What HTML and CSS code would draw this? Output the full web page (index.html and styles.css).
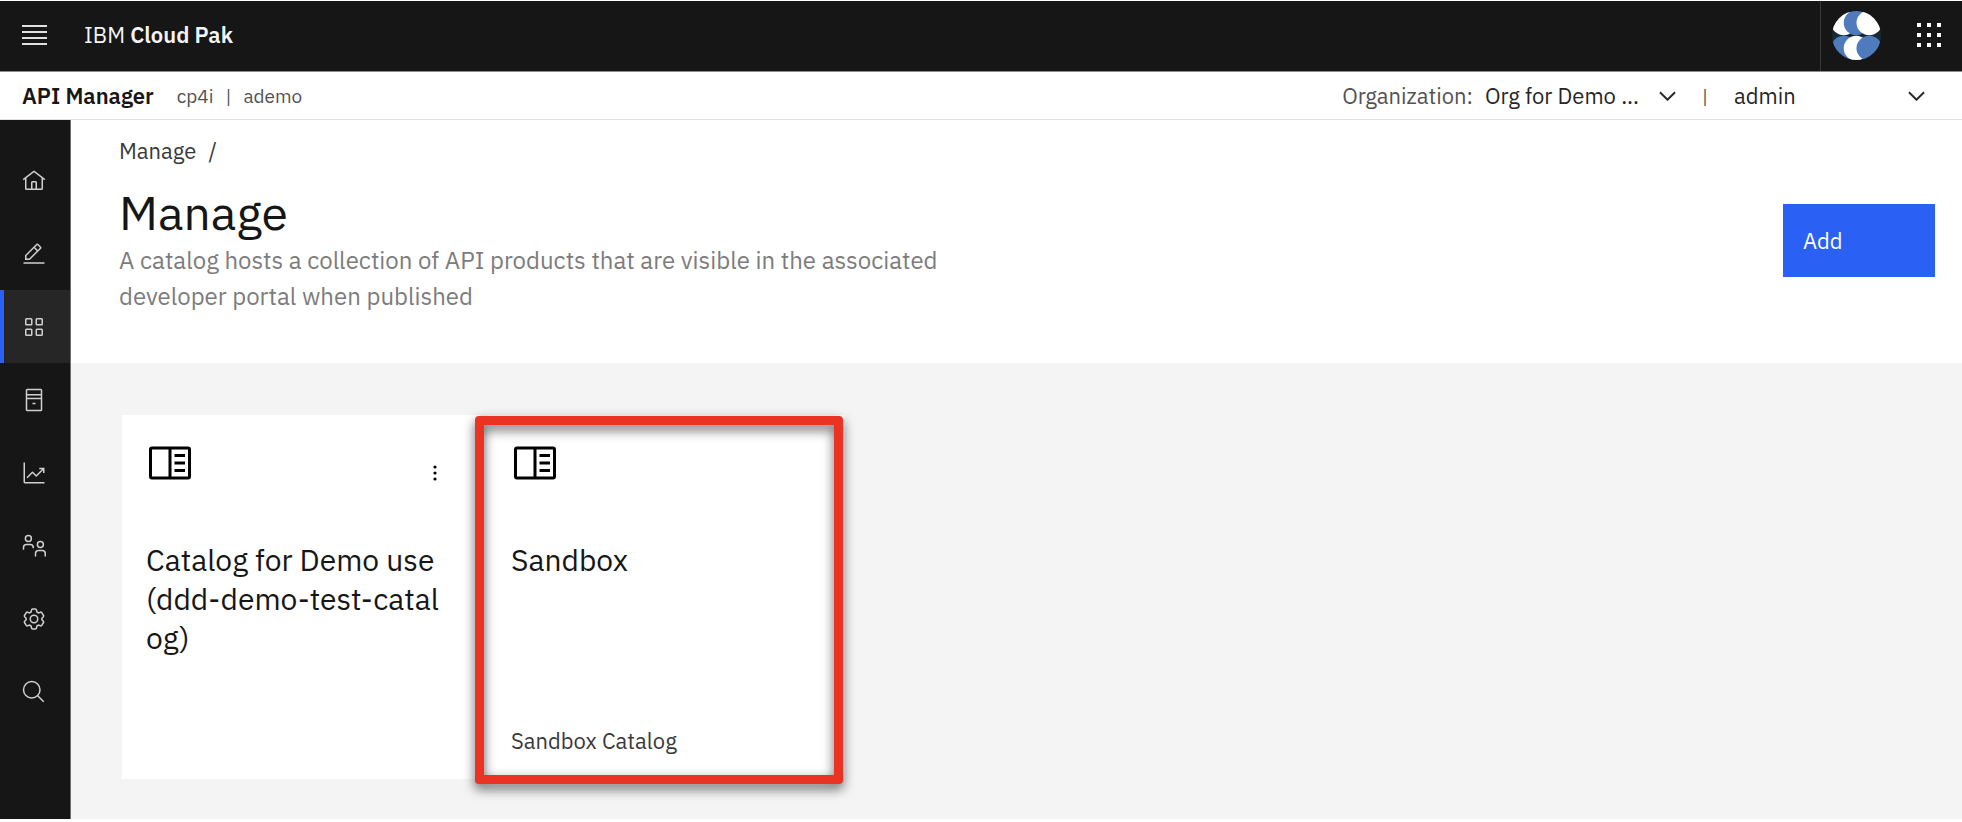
FILE: index.html
```html
<!DOCTYPE html>
<html lang="en">
<head>
<meta charset="utf-8">
<meta name="viewport" content="width=device-width, initial-scale=1">
<title>API Manager - Manage</title>
<link rel="stylesheet" href="styles.css">
</head>
<body>
<svg class="defs" aria-hidden="true">
  <symbol id="book" viewBox="0 0 32 32">
    <path d="M19 10h7v2h-7zM19 15h7v2h-7zM19 20h7v2h-7z"/>
    <path d="M28 5H4a2 2 0 0 0-2 2v18a2 2 0 0 0 2 2h24a2 2 0 0 0 2-2V7a2 2 0 0 0-2-2zM4 7h11v18H4zm13 18V7h11v18z"/>
  </symbol>
</svg>
<div class="shell">
  <header class="topbar">
    <button class="icon-button" type="button" aria-label="Open menu">
      <svg class="menu-icon" viewBox="0 0 25 20"><path d="M0 1h25M0 7h25M0 13h25M0 19h25"/></svg>
    </button>
    <a class="brand" href="#">IBM <strong>Cloud Pak</strong></a>
    <div class="topbar-actions">
      <button class="icon-button" type="button" aria-label="Account">
        <svg class="avatar" viewBox="155 30 146 146">
          <clipPath id="disc"><circle cx="228" cy="103" r="73"/></clipPath>
          <g clip-path="url(#disc)">
            <rect x="155" y="30" width="146" height="146" fill="#172a33"/>
            <ellipse cx="190" cy="65" rx="38" ry="37" fill="#fff"/>
            <ellipse cx="227" cy="65" rx="37" ry="37" fill="#4f7abc"/>
            <ellipse cx="266" cy="65" rx="38" ry="37" fill="#fff"/>
            <ellipse cx="190" cy="141" rx="38" ry="37" fill="#4f7abc"/>
            <ellipse cx="227" cy="141" rx="37" ry="37" fill="#fff"/>
            <ellipse cx="266" cy="141" rx="38" ry="37" fill="#4f7abc"/>
          </g>
        </svg>
      </button>
      <button class="icon-button" type="button" aria-label="App switcher">
        <svg class="switcher-icon" viewBox="0 0 24 24"><path d="M0 0h4v4H0zM10 0h4v4h-4zM20 0h4v4h-4zM0 10h4v4H0zM10 10h4v4h-4zM20 10h4v4h-4zM0 20h4v4H0zM10 20h4v4h-4zM20 20h4v4h-4z"/></svg>
      </button>
    </div>
  </header>

  <div class="subbar">
    <strong class="product">API Manager</strong>
    <span class="instance">cp4i</span>
    <span class="instance-divider">|</span>
    <span class="instance">ademo</span>
    <div class="context">
      <label class="context-label" for="org">Organization:</label>
      <span class="picker">
        <select id="org"><option>Org for Demo ...</option></select>
        <svg class="chevron" viewBox="0 0 18 10"><path d="M1 1l8 8 8-8"/></svg>
      </span>
      <span class="context-divider">|</span>
      <span class="picker">
        <select aria-label="User"><option>admin</option></select>
        <svg class="chevron" viewBox="0 0 18 10"><path d="M1 1l8 8 8-8"/></svg>
      </span>
    </div>
  </div>

  <div class="body">
    <nav class="sidebar" aria-label="Main">
      <a class="nav-item" href="#" aria-label="Home"><svg viewBox="0 0 32 32"><path d="M16.6 2.2a1 1 0 0 0-1.2 0L1 13.4 2.2 15 4 13.6V26a2 2 0 0 0 2 2h20a2 2 0 0 0 2-2V13.6l1.8 1.4 1.2-1.6zM18 26h-4v-8h4zm2 0v-8a2 2 0 0 0-2-2h-4a2 2 0 0 0-2 2v8H6V12l10-7.7L26 12v14z"/></svg></a>
      <a class="nav-item" href="#" aria-label="Develop"><svg viewBox="0 0 32 32"><path d="M2 27h28v2H2zM25.4 9c.8-.8.8-2 0-2.8l-3.6-3.6c-.8-.8-2-.8-2.8 0l-15 15V24h6.4zM20.4 4L24 7.6l-3 3L17.4 7zM6 22v-3.6l10-10 3.6 3.6-10 10z"/></svg></a>
      <a class="nav-item nav-item-active" href="#" aria-label="Manage" aria-current="page"><svg viewBox="0 0 32 32"><path d="M12 4H6a2 2 0 0 0-2 2v6a2 2 0 0 0 2 2h6a2 2 0 0 0 2-2V6a2 2 0 0 0-2-2zm0 8H6V6h6zM26 4h-6a2 2 0 0 0-2 2v6a2 2 0 0 0 2 2h6a2 2 0 0 0 2-2V6a2 2 0 0 0-2-2zm0 8h-6V6h6zM12 18H6a2 2 0 0 0-2 2v6a2 2 0 0 0 2 2h6a2 2 0 0 0 2-2v-6a2 2 0 0 0-2-2zm0 8H6v-6h6zM26 18h-6a2 2 0 0 0-2 2v6a2 2 0 0 0 2 2h6a2 2 0 0 0 2-2v-6a2 2 0 0 0-2-2zm0 8h-6v-6h6z"/></svg></a>
      <a class="nav-item" href="#" aria-label="Resources"><svg class="line" viewBox="0 0 32 32"><rect x="6" y="2" width="20" height="28" rx="1"/><path d="M6 9h20M6 14h20M14 20.5h4"/></svg></a>
      <a class="nav-item" href="#" aria-label="Analytics"><svg viewBox="0 0 32 32"><path d="M4 2H2v26a2 2 0 0 0 2 2h26v-2H4zM30 9h-7v2h3.6L19 18.6l-4.3-4.3a1 1 0 0 0-1.4 0L6 21.6 7.4 23l6.6-6.6 4.3 4.3a1 1 0 0 0 1.4 0L28 12.4V16h2z"/></svg></a>
      <a class="nav-item" href="#" aria-label="Members"><svg class="line" viewBox="0 0 32 32"><circle cx="8.5" cy="6" r="4"/><path d="M2 21v-3a4 4 0 0 1 4-4h5a4 4 0 0 1 4 4v1"/><circle cx="24.5" cy="14" r="4"/><path d="M18 30v-4a4 4 0 0 1 4-4h5a4 4 0 0 1 4 4v4"/></svg></a>
      <a class="nav-item" href="#" aria-label="Settings"><svg class="line" viewBox="0 0 32 32"><circle cx="16" cy="16" r="5"/><path d="M26.5 17v-2l2-2a1.5 1.5 0 0 0 .2-1.7L26.3 7.5a1.5 1.5 0 0 0-1.7-.6l-2.7.9-2-1.2-.6-2.6a1.5 1.5 0 0 0-1.4-1.2h-3.8a1.5 1.5 0 0 0-1.4 1.2l-.6 2.6-2 1.2-2.700-.9a1.5 1.5 0 0 0-1.7.6l-2.4 3.8a1.5 1.5 0 0 0 .2 1.7l2 2v2l-2 2a1.5 1.5 0 0 0-.2 1.7l2.4 3.8a1.5 1.5 0 0 0 1.7.6l2.7-.9 2 1.2.6 2.600a1.5 1.5 0 0 0 1.4 1.2h3.8a1.5 1.5 0 0 0 1.4-1.2l.6-2.600 2-1.2 2.7.9a1.5 1.5 0 0 0 1.7-.6l2.4-3.8a1.5 1.5 0 0 0-.2-1.7z"/></svg></a>
      <a class="nav-item" href="#" aria-label="Search"><svg class="line" viewBox="0 0 32 32"><circle cx="13" cy="13" r="11"/><path d="M21 21l8 8"/></svg></a>
    </nav>

    <main class="main">
      <section class="hero">
        <div class="hero-text">
          <nav class="breadcrumb" aria-label="Breadcrumb"><a href="#">Manage</a><span>/</span></nav>
          <h1 class="title">Manage</h1>
          <p class="description">A catalog hosts a collection of API products that are visible in the associated developer portal when published</p>
        </div>
        <button class="add-button" type="button">Add</button>
      </section>

      <section class="catalogs">
        <article class="card">
          <div class="card-head">
            <svg class="card-icon" aria-hidden="true"><use href="#book"/></svg>
            <button class="icon-button card-menu" type="button" aria-label="Catalog options">
              <svg class="kebab" viewBox="0 0 4 16"><circle cx="2" cy="2" r="1.6"/><circle cx="2" cy="8" r="1.6"/><circle cx="2" cy="14" r="1.6"/></svg>
            </button>
          </div>
          <h2 class="card-title"><span>Catalog for Demo use</span> <span class="card-id">(ddd-demo-test-catalog)</span></h2>
        </article>
        <article class="card card-marked">
          <div class="card-head">
            <svg class="card-icon" aria-hidden="true"><use href="#book"/></svg>
          </div>
          <h2 class="card-title">Sandbox</h2>
          <p class="card-summary">Sandbox Catalog</p>
        </article>
      </section>
    </main>
  </div>
</div>
</body>
</html>
```

FILE: styles.css
```css
* {
  box-sizing: border-box;
}

body {
  margin: 0;
  background: #fff;
  color: #161616;
  font-family: "IBM Plex Sans", "Noto Sans", sans-serif;
  font-size: 22px;
  line-height: 28px;
}

h1,
h2,
p {
  margin: 0;
  font-weight: 400;
}

a {
  color: inherit;
  text-decoration: none;
}

button,
select {
  margin: 0;
  border: 0;
  background: none;
  color: inherit;
  font: inherit;
  cursor: pointer;
}

svg {
  display: block;
}

.defs {
  display: none;
}

.icon-button {
  display: flex;
  padding: 0;
}

.shell {
  display: flex;
  flex-direction: column;
  min-height: 100vh;
  padding: 1px 0 3px;
}

/* Top bar */

.topbar {
  display: flex;
  align-items: center;
  height: 71px;
  padding: 0 0 2px 22px;
  border-bottom: 1px solid #8d8d8d;
  background: #161616;
  color: #f4f4f4;
}

.menu-icon {
  width: 25px;
  height: 20px;
  stroke: #e0e0e0;
  stroke-width: 2;
}

.brand {
  margin-left: 37px;
}

.brand strong,
.product {
  font-weight: 600;
}

.topbar-actions {
  display: flex;
  align-items: center;
  align-self: stretch;
  gap: 36px;
  margin: 0 0 -2px auto;
  padding: 0 21px 2px 11px;
  border-left: 1px solid #393939;
}

.avatar {
  width: 49px;
  height: 49px;
}

.switcher-icon {
  width: 24px;
  height: 24px;
  fill: #fff;
}

/* Product bar */

.subbar {
  display: flex;
  align-items: center;
  height: 48px;
  padding: 0 37px 0 22px;
  border-bottom: 1px solid #e0e0e0;
}

.product {
  margin-right: 23px;
}

.instance,
.instance-divider {
  color: #525252;
  font-size: 19px;
}

.instance-divider {
  margin: 0 12px;
}

.context {
  display: flex;
  align-items: center;
  margin-left: auto;
}

.context-label {
  margin-right: 12px;
  color: #525252;
}

.picker {
  display: grid;
  align-items: center;
  width: 191px;
}

.picker > * {
  grid-area: 1 / 1;
}

.picker select {
  width: 100%;
  padding: 0;
  appearance: none;
  color: #262626;
}

.chevron {
  justify-self: end;
  width: 17px;
  height: 10px;
  fill: none;
  stroke: #262626;
  stroke-width: 2;
  pointer-events: none;
}

.context-divider {
  width: 58px;
  color: #525252;
  font-size: 19px;
  text-align: center;
}

/* Side navigation */

.body {
  display: flex;
  flex: 1;
}

.sidebar {
  flex: none;
  width: 71px;
  padding-top: 24px;
  border-right: 1px solid #6f6f6f;
  background: #161616;
}

.nav-item {
  display: flex;
  align-items: center;
  height: 73px;
  padding-left: 18px;
  border-left: 4px solid transparent;
}

.nav-item-active {
  border-left-color: #2a60f5;
  background: #262626;
}

.nav-item svg {
  width: 24px;
  height: 24px;
  fill: #d0d0d0;
}

.nav-item .line {
  fill: none;
  stroke: #d0d0d0;
  stroke-width: 2;
}

/* Page */

.main {
  display: flex;
  flex: 1;
  flex-direction: column;
  min-width: 0;
  background: #f4f4f4;
}

.hero {
  display: flex;
  align-items: flex-start;
  justify-content: space-between;
  gap: 32px;
  padding: 17px 27px 49px 48px;
  background: #fff;
}

.hero-text {
  max-width: 860px;
}

.breadcrumb {
  display: flex;
  gap: 12px;
  color: #393939;
}

.title {
  margin-top: 19px;
  font-size: 48px;
  line-height: 56px;
}

.description {
  margin-top: 2px;
  color: #7c7c7c;
  font-size: 24px;
  line-height: 36px;
}

.add-button {
  flex: none;
  width: 152px;
  height: 73px;
  margin-top: 67px;
  padding: 0 20px;
  background: #2b60f5;
  color: #fff;
  text-align: left;
}

.catalogs {
  display: grid;
  grid-template-columns: repeat(auto-fill, 358px);
  gap: 7px;
  padding: 52px 51px 40px;
}

.card {
  position: relative;
  display: flex;
  flex-direction: column;
  min-height: 364px;
  padding: 24px;
  background: #fff;
}

.card-head {
  display: flex;
  align-items: center;
  justify-content: space-between;
}

.card-icon {
  width: 48px;
  height: 48px;
}

.card-menu {
  justify-content: center;
  width: 42px;
  padding-top: 20px;
}

.kebab {
  width: 4px;
  height: 16px;
}

.card-title {
  margin-top: 53px;
  padding-right: 10px;
  font-size: 30px;
  line-height: 39px;
}

.card-id {
  display: block;
  word-break: break-all;
}

.card-summary {
  margin-top: auto;
  color: #393939;
}

/* Callout frame drawn over the card */
.card-marked::after {
  content: "";
  position: absolute;
  inset: 1px 2px -5px -12px;
  border: 9px solid #eb3323;
  border-radius: 4px;
  filter: drop-shadow(0 5px 6px rgba(0, 0, 0, 0.6));
  pointer-events: none;
}
```
